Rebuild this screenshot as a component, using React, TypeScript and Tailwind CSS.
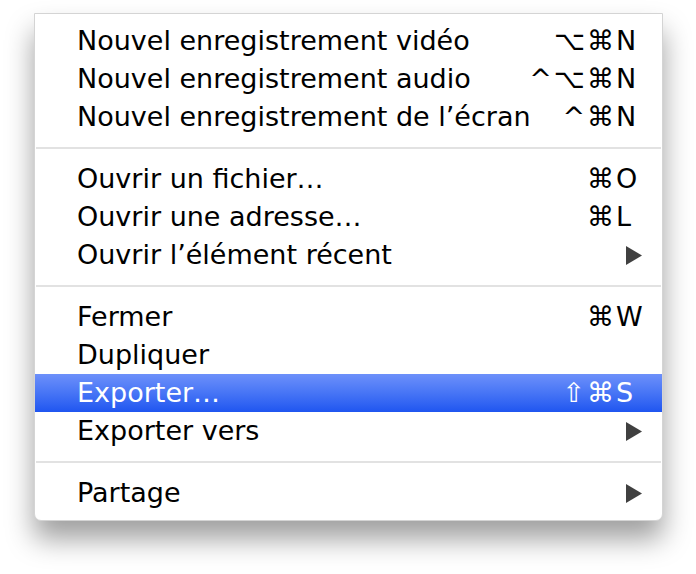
import React from "react";

type Item =
  | { kind: "sep" }
  | { kind: "item"; label: string; mods?: string; keyChar?: string; submenu?: boolean; active?: boolean };

const items: Item[] = [
  { kind: "item", label: "Nouvel enregistrement vidéo", mods: "⌥⌘", keyChar: "N" },
  { kind: "item", label: "Nouvel enregistrement audio", mods: "^⌥⌘", keyChar: "N" },
  { kind: "item", label: "Nouvel enregistrement de l’écran", mods: "^⌘", keyChar: "N" },
  { kind: "sep" },
  { kind: "item", label: "Ouvrir un fichier…", mods: "⌘", keyChar: "O" },
  { kind: "item", label: "Ouvrir une adresse…", mods: "⌘", keyChar: "L" },
  { kind: "item", label: "Ouvrir l’élément récent", submenu: true },
  { kind: "sep" },
  { kind: "item", label: "Fermer", mods: "⌘", keyChar: "W" },
  { kind: "item", label: "Dupliquer" },
  { kind: "item", label: "Exporter…", mods: "⇧⌘", keyChar: "S", active: true },
  { kind: "item", label: "Exporter vers", submenu: true },
  { kind: "sep" },
  { kind: "item", label: "Partage", submenu: true },
];

function Arrow() {
  return (
    <svg width="16" height="19" viewBox="0 0 16 19" className="block">
      <polygon points="0,0 16,9.5 0,19" fill="#404040" />
    </svg>
  );
}

export default function App() {
  return (
    <div className="w-[696px] h-[574px] bg-white pt-[13px] pl-[34px]">
      <div
        className="w-[629px] bg-white border border-[#d4d4d4] rounded-b-[7px] py-[8px] shadow-[0_18px_28px_rgba(0,0,0,0.38)] text-black text-[27px]"
        style={{ fontFamily: '"DejaVu Sans", "Liberation Sans", sans-serif' }}
      >
        {items.map((it, i) =>
          it.kind === "sep" ? (
            <div key={i} className="h-[24px] flex items-center px-[1px]">
              <div className="h-[2px] w-full bg-[#e2e2e2]" />
            </div>
          ) : (
            <div
              key={i}
              className={
                it.active
                  ? "h-[38px] flex items-center pl-[42px] pr-[20px] bg-gradient-to-b from-[#6d90fa] to-[#1f55f0] text-white"
                  : "h-[38px] flex items-center pl-[42px] pr-[20px]"
              }
            >
              <span className="flex-1 whitespace-nowrap leading-none -mt-[2px]">{it.label}</span>
              {it.submenu ? (
                <span className="w-[26px] flex justify-end">
                  <Arrow />
                </span>
              ) : it.keyChar ? (
                <span className="flex items-center leading-none -mt-[2px]">
                  <span className="whitespace-nowrap tracking-[2px]">{it.mods}</span>
                  <span className="w-[26px]">{it.keyChar}</span>
                </span>
              ) : null}
            </div>
          )
        )}
      </div>
    </div>
  );
}
